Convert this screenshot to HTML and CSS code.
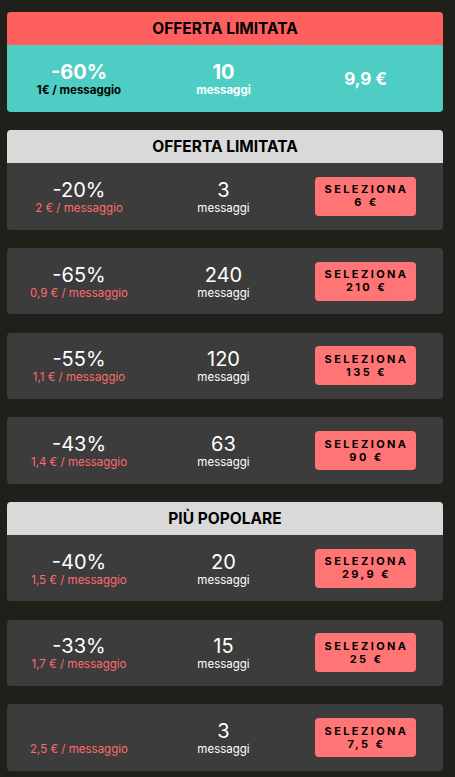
FILE: index.html
```html
<!DOCTYPE html>
<html lang="it">
<head>
<meta charset="UTF-8">
<meta name="viewport" content="width=device-width, initial-scale=1.0">
<title>Pacchetti messaggi</title>
<link rel="stylesheet" href="styles.css">
</head>
<body>
<div class="list">

  <div class="card promo">
    <div class="card-head red">OFFERTA LIMITATA</div>
    <div class="card-body teal">
      <div class="col">
        <div class="big bold">-60%</div>
        <div class="small bold dark">1€ / messaggio</div>
      </div>
      <div class="col">
        <div class="big bold">10</div>
        <div class="small bold">messaggi</div>
      </div>
      <div class="col">
        <div class="price">9,9 €</div>
      </div>
    </div>
  </div>

  <div class="card">
    <div class="card-head">OFFERTA LIMITATA</div>
    <div class="card-body">
      <div class="col">
        <div class="big">-20%</div>
        <div class="small coral">2 € / messaggio</div>
      </div>
      <div class="col">
        <div class="big">3</div>
        <div class="small">messaggi</div>
      </div>
      <div class="col">
        <button class="select-btn">SELEZIONA<br>6 €</button>
      </div>
    </div>
  </div>

  <div class="card">
    <div class="card-body">
      <div class="col">
        <div class="big">-65%</div>
        <div class="small coral">0,9 € / messaggio</div>
      </div>
      <div class="col">
        <div class="big">240</div>
        <div class="small">messaggi</div>
      </div>
      <div class="col">
        <button class="select-btn">SELEZIONA<br>210 €</button>
      </div>
    </div>
  </div>

  <div class="card">
    <div class="card-body">
      <div class="col">
        <div class="big">-55%</div>
        <div class="small coral">1,1 € / messaggio</div>
      </div>
      <div class="col">
        <div class="big">120</div>
        <div class="small">messaggi</div>
      </div>
      <div class="col">
        <button class="select-btn">SELEZIONA<br>135 €</button>
      </div>
    </div>
  </div>

  <div class="card">
    <div class="card-body">
      <div class="col">
        <div class="big">-43%</div>
        <div class="small coral">1,4 € / messaggio</div>
      </div>
      <div class="col">
        <div class="big">63</div>
        <div class="small">messaggi</div>
      </div>
      <div class="col">
        <button class="select-btn">SELEZIONA<br>90 €</button>
      </div>
    </div>
  </div>

  <div class="card">
    <div class="card-head">PIÙ POPOLARE</div>
    <div class="card-body">
      <div class="col">
        <div class="big">-40%</div>
        <div class="small coral">1,5 € / messaggio</div>
      </div>
      <div class="col">
        <div class="big">20</div>
        <div class="small">messaggi</div>
      </div>
      <div class="col">
        <button class="select-btn">SELEZIONA<br>29,9 €</button>
      </div>
    </div>
  </div>

  <div class="card">
    <div class="card-body">
      <div class="col">
        <div class="big">-33%</div>
        <div class="small coral">1,7 € / messaggio</div>
      </div>
      <div class="col">
        <div class="big">15</div>
        <div class="small">messaggi</div>
      </div>
      <div class="col">
        <button class="select-btn">SELEZIONA<br>25 €</button>
      </div>
    </div>
  </div>

  <div class="card">
    <div class="card-body">
      <div class="col">
        <div class="big">&nbsp;</div>
        <div class="small coral">2,5 € / messaggio</div>
      </div>
      <div class="col">
        <div class="big">3</div>
        <div class="small">messaggi</div>
      </div>
      <div class="col">
        <button class="select-btn">SELEZIONA<br>7,5 €</button>
      </div>
    </div>
  </div>

</div>
</body>
</html>
```

FILE: styles.css
```css
body {
  margin: 0;
  background-color: #20201b;
  font-family: Inter, "Noto Sans", sans-serif;
  color: #fff;
}

.list {
  display: flex;
  flex-direction: column;
  gap: 18.3px;
  padding: 12px 12px 0 7px;
}

.card {
  border-radius: 4px;
  overflow: hidden;
  background-color: #3c3c3c;
}

.card-head {
  height: 33px;
  display: flex;
  align-items: center;
  justify-content: center;
  background-color: #d9d9d9;
  color: #000;
  font-weight: 700;
  font-size: 15.5px;
}

.card-head.red {
  background-color: #ff5f5f;
}

.card-body {
  height: 66.4px;
  display: grid;
  grid-template-columns: 144px 145px 1fr;
  align-items: center;
}

.card-body.teal {
  background-color: #4ecdc4;
  height: 67px;
}

.col {
  display: flex;
  flex-direction: column;
  align-items: center;
}

.big {
  font-size: 20px;
  line-height: 24px;
}

.small {
  font-size: 11.5px;
  line-height: 13px;
}

.bold {
  font-weight: 700;
}

.dark {
  color: #000;
}

.coral {
  color: #ff6b6b;
}

.price {
  font-size: 17px;
  font-weight: 700;
  margin-right: 8px;
}

.select-btn {
  width: 101px;
  height: 39px;
  margin-right: 8px;
  border: none;
  border-radius: 4px;
  background-color: #ff7575;
  color: #000;
  font-family: inherit;
  font-weight: 700;
  font-size: 11px;
  line-height: 13px;
  letter-spacing: 2.4px;
  padding: 0 0 0 2px;
  cursor: pointer;
}
```
